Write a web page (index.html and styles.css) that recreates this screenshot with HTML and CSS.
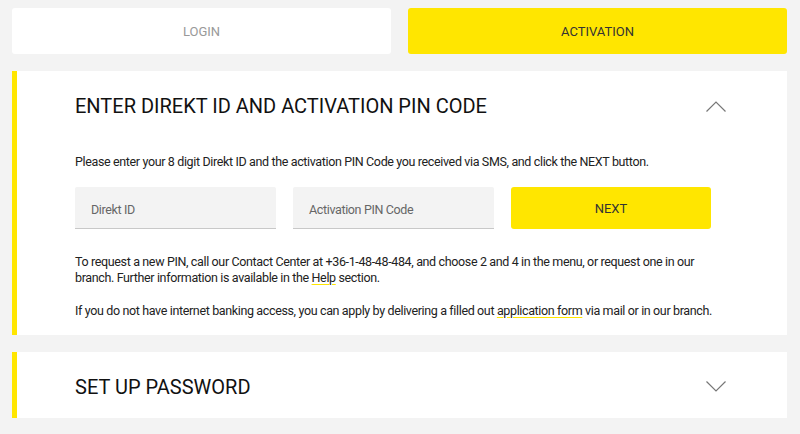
FILE: index.html
```html
<!DOCTYPE html>
<html>
<head>
<meta charset="utf-8">
<link rel="stylesheet" href="styles.css">
</head>
<body>
<div class="tabs">
  <div class="tab">LOGIN</div>
  <div class="tab tab-active">ACTIVATION</div>
</div>
<section class="card">
  <div class="card-head">
    <h2 class="card-title">ENTER DIREKT ID AND ACTIVATION PIN CODE</h2>
    <svg class="chev" width="20" height="12" viewBox="0 0 20 12"><path d="M0.5 11.5 L10 2 L19.5 11.5" fill="none" stroke="#777" stroke-width="1.2"/></svg>
  </div>
  <div class="card-body">
    <p class="intro">Please enter your 8 digit Direkt ID and the activation PIN Code you received via SMS, and click the NEXT button.</p>
    <div class="form-row">
      <div class="field">Direkt ID</div>
      <div class="field">Activation PIN Code</div>
      <div class="btn-next">NEXT</div>
    </div>
    <p class="info">To request a new PIN, call our Contact Center at +36-1-48-48-484, and choose 2 and 4 in the menu, or request one in our branch. Further information is available in the <span class="link">Help</span> section.</p>
    <p class="info">If you do not have internet banking access, you can apply by delivering a filled out <span class="link">application form</span> via mail or in our branch.</p>
  </div>
</section>
<section class="card card-collapsed">
  <div class="card-head">
    <h2 class="card-title">SET UP PASSWORD</h2>
    <svg class="chev" width="20" height="12" viewBox="0 0 20 12"><path d="M0.5 0.5 L10 10 L19.5 0.5" fill="none" stroke="#777" stroke-width="1.2"/></svg>
  </div>
</section>
</body>
</html>
```
FILE: styles.css
```css
* { box-sizing: border-box; }
html, body { margin: 0; }
body {
  background: #f3f3f3;
  padding: 8px 13px 0 12px;
  font-family: Roboto, "Liberation Sans", Arial, sans-serif;
  color: #222;
}
.tabs {
  display: grid;
  grid-template-columns: 1fr 1fr;
  gap: 17px;
}
.tab {
  height: 46px;
  background: #fff;
  border-radius: 3px;
  display: flex;
  align-items: center;
  justify-content: center;
  font-size: 13px;
  color: #999;
}
.tab-active {
  background: #ffe600;
  color: #333;
}
.card {
  margin-top: 17px;
  background: #fff;
  border-left: 5px solid #ffe600;
  padding: 23px 61px 16px 58px;
}
.card-collapsed {
  padding-bottom: 19px;
}
.card-head {
  display: flex;
  align-items: center;
  justify-content: space-between;
  height: 24px;
}
.card-title {
  margin: 0;
  font-size: 20px;
  font-weight: 400;
  line-height: 24px;
  color: #111;
}
.chev { display: block; }
.card-body { padding-top: 36px; }
.intro, .info {
  margin: 0;
  font-size: 12.5px;
  letter-spacing: -0.36px;
  line-height: 16px;
}
.info { margin-top: 17px; }
.form-row {
  display: grid;
  grid-template-columns: 201px 201px 200px;
  gap: 17px;
  margin: 17px 0 25px;
}
.form-row + .info { margin-top: 0; }
.field {
  height: 42px;
  background: #f3f3f3;
  border-bottom: 1px solid #c8c8c8;
  border-radius: 2px 2px 0 0;
  display: flex;
  align-items: center;
  padding-left: 16px;
  padding-top: 4px;
  font-size: 12.5px;
  letter-spacing: -0.36px;
  color: #666;
}
.btn-next {
  height: 42px;
  background: #ffe600;
  border-radius: 3px;
  display: flex;
  align-items: center;
  justify-content: center;
  font-size: 13px;
  color: #333;
}
.link {
  text-decoration: underline;
  text-decoration-color: #ffe600;
  text-underline-offset: 2px;
}
```
